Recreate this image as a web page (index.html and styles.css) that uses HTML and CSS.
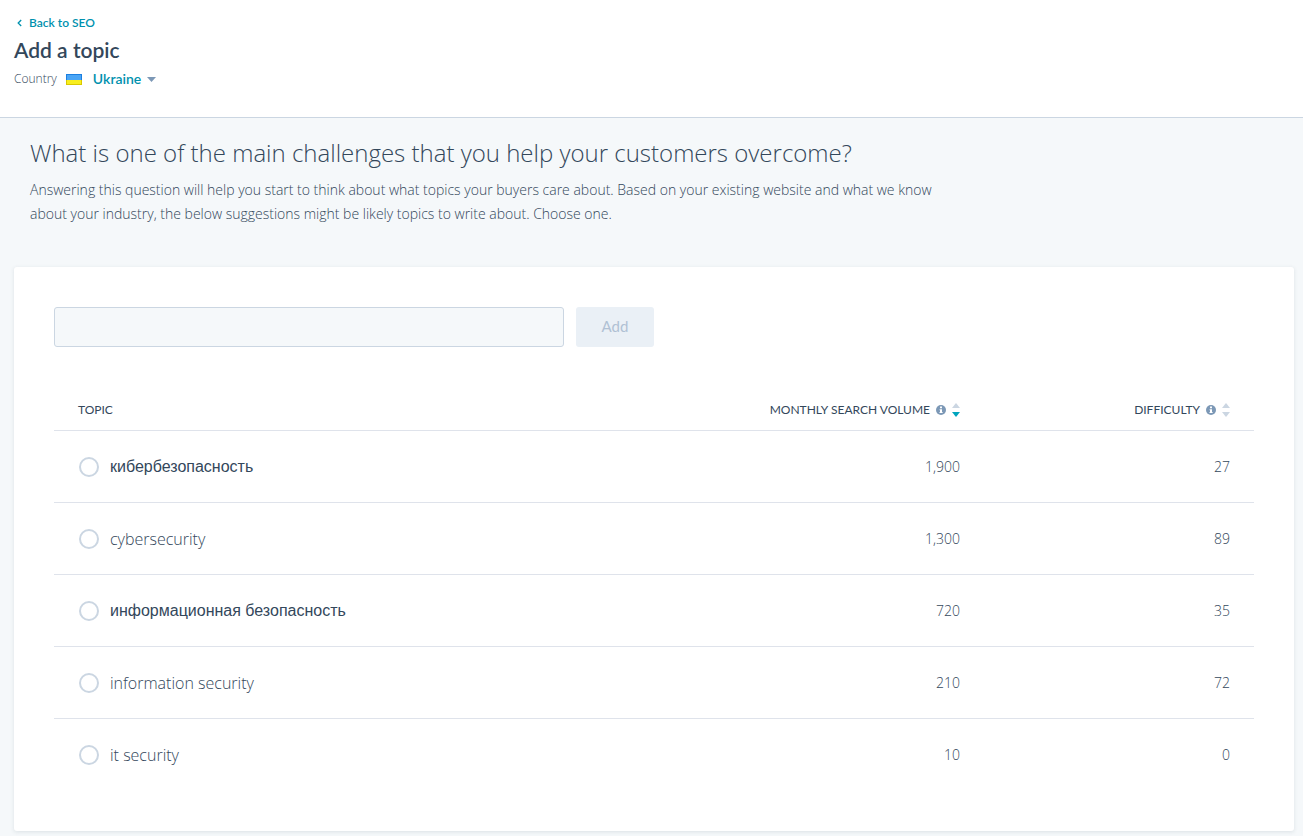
FILE: index.html
```html
<!DOCTYPE html>
<html lang="en">
<head>
<meta charset="utf-8">
<title>Add a topic</title>
<meta name="viewport" content="width=device-width, initial-scale=1">
<link rel="stylesheet" href="styles.css">
</head>
<body>
<svg class="sprite" aria-hidden="true">
  <symbol id="info" viewBox="0 0 10 10">
    <circle cx="5" cy="5" r="5" fill="#7c98b6"/>
    <path d="M4 1.6h2v1.6H4zM3.6 4.2H6v2.9h.6v1H3.500v-1H4V5.2h-.4z" fill="#fff"/>
  </symbol>
</svg>
<header class="page-header">
  <a class="back-link" href="#">
    <svg class="back-icon" viewBox="0 0 5 8" aria-hidden="true"><path d="M4.2 1 1.2 4l3 3" fill="none" stroke="currentColor" stroke-width="1.3"/></svg>
    Back to SEO
  </a>
  <h1 class="page-title">Add a topic</h1>
  <div class="country">
    <span class="country-label" id="country-label">Country</span>
    <svg class="flag" viewBox="0 0 16 11" aria-hidden="true">
      <rect width="16" height="6" fill="#1b7fe0"/>
      <rect x="1" y="1" width="14" height="5" fill="#4aa5f5"/>
      <rect y="6" width="16" height="5" fill="#d9c800"/>
      <rect x="1" y="6" width="14" height="4" fill="#f8ee1e"/>
    </svg>
    <button class="country-button" type="button" aria-describedby="country-label">Ukraine
      <svg class="caret" viewBox="0 0 9 5" aria-hidden="true"><path d="M0 0h9L4.500 5z" fill="#7c98b6"/></svg>
    </button>
  </div>
</header>
<main class="content">
  <section class="intro">
    <h2 class="intro-title">What is one of the main challenges that you help your customers overcome?</h2>
    <p class="intro-text">Answering this question will help you start to think about what topics your buyers care about. Based on your existing website and what we know about your industry, the below suggestions might be likely topics to write about. Choose one.</p>
  </section>
  <section class="card">
    <form class="add-form">
      <input class="topic-input" type="text" aria-label="Topic">
      <button class="add-button" type="button" disabled>Add</button>
    </form>
    <table class="topics">
      <thead>
        <tr>
          <th class="col-topic" scope="col">TOPIC</th>
          <th class="col-volume" scope="col"><button class="sort" type="button">MONTHLY SEARCH VOLUME
            <svg class="info" aria-hidden="true"><use href="#info"/></svg>
            <svg class="arrows" viewBox="0 0 8 14" aria-hidden="true"><path d="M0 5h8L4 0z" fill="#cbd6e2"/><path d="M0 9h8l-4 5z" fill="#00a4bd"/></svg></button></th>
          <th class="col-difficulty" scope="col"><button class="sort" type="button">DIFFICULTY
            <svg class="info" aria-hidden="true"><use href="#info"/></svg>
            <svg class="arrows" viewBox="0 0 8 14" aria-hidden="true"><path d="M0 5h8L4 0z" fill="#cbd6e2"/><path d="M0 9h8l-4 5z" fill="#cbd6e2"/></svg></button></th>
        </tr>
      </thead>
      <tbody>
        <tr><td><label class="choice cyrillic"><input class="radio" type="radio" name="topic">кибербезопасность</label></td><td class="number">1,900</td><td class="number">27</td></tr>
        <tr><td><label class="choice"><input class="radio" type="radio" name="topic">cybersecurity</label></td><td class="number">1,300</td><td class="number">89</td></tr>
        <tr><td><label class="choice cyrillic"><input class="radio" type="radio" name="topic">информационная безопасность</label></td><td class="number">720</td><td class="number">35</td></tr>
        <tr><td><label class="choice"><input class="radio" type="radio" name="topic">information security</label></td><td class="number">210</td><td class="number">72</td></tr>
        <tr><td><label class="choice"><input class="radio" type="radio" name="topic">it security</label></td><td class="number">10</td><td class="number">0</td></tr>
      </tbody>
    </table>
  </section>
</main>
</body>
</html>
```
FILE: styles.css
```css
*, *::before, *::after { box-sizing: border-box; }

body {
  margin: 0;
  background: #f5f8fa;
  color: #33475b;
  font-family: Lato, "Liberation Sans", sans-serif;
  font-size: 14px;
  font-variant-ligatures: none;
  line-height: 24px;
}

button { border: 0; padding: 0; background: none; color: inherit; font: inherit; }

.sprite { display: block; width: 0; height: 0; }

.page-header {
  padding: 13px 14px 26px;
  background: #fff;
  border-bottom: 1px solid #cbd6e2;
}

.back-link {
  display: flex;
  align-items: center;
  gap: 7px;
  padding-left: 3px;
  color: #0091ae;
  font-size: 12px;
  font-weight: 600;
  line-height: 19px;
  text-decoration: none;
}
.back-icon { width: 5px; height: 8px; }

.page-title {
  margin: 4px 0 3px;
  font-size: 21px;
  font-weight: 600;
  line-height: 28px;
}

.country { display: flex; align-items: center; }
.country-label { font-family: "Open Sans", sans-serif; font-size: 12px; font-weight: 350; }
.flag { width: 16px; height: 11px; margin: 0 11px 0 9px; }
.country-button {
  display: flex;
  align-items: center;
  gap: 6px;
  color: #0091ae;
  font-size: 14px;
  font-weight: 600;
}
.caret { width: 9px; height: 5px; }

.content { padding: 19px 9px 5px 14px; }

.intro { padding: 0 16px; font-family: "Open Sans", sans-serif; font-weight: 350; }
.intro-title {
  margin: 0 0 9px;
  font-size: 24px;
  font-weight: 350;
  line-height: 32px;
}
.intro-text { max-width: 928px; margin: 0 0 41px; }

.card {
  padding: 40px;
  background: #fff;
  border-radius: 3px;
  box-shadow: 0 1px 4px rgba(45, 62, 80, 0.12);
}

.add-form { display: flex; gap: 12px; }
.topic-input {
  width: 510px;
  min-width: 0;
  height: 40px;
  padding: 0 12px;
  border: 1px solid #cbd6e2;
  border-radius: 3px;
  background: #f5f8fa;
  color: inherit;
  font: inherit;
}
.add-button {
  width: 78px;
  padding-bottom: 2px;
  border-radius: 3px;
  background: #eaf0f6;
  color: #b0c1d4;
  font-size: 15px;
}

.topics { width: 100%; margin-top: 42px; border-collapse: separate; border-spacing: 0; table-layout: fixed; }
.topics th {
  height: 42px;
  padding: 0 24px;
  border-bottom: 1px solid #dfe3eb;
  font-size: 12px;
  font-weight: 400;
  text-align: left;
}
.topics td { height: 72px; padding: 0 24px; border-bottom: 1px solid #dfe3eb; }
.topics tbody tr:last-child td { border-bottom-color: transparent; }
.col-volume { width: 300px; }
.col-difficulty { width: 270px; }
.sort { display: flex; align-items: center; gap: 6px; margin-left: auto; white-space: nowrap; }
.info { width: 10px; height: 10px; }
.arrows { width: 8px; height: 14px; }

.choice {
  display: flex;
  align-items: center;
  gap: 11px;
  padding-left: 1px;
  font-family: "Open Sans", sans-serif;
  font-size: 16px;
  font-weight: 350;
}
.cyrillic { font-family: "Liberation Sans", Arial, sans-serif; font-weight: 400; }
.radio {
  appearance: none;
  flex: none;
  width: 20px;
  height: 20px;
  margin: 0;
  border: 2px solid #cbd6e2;
  border-radius: 50%;
  background: #fff;
}
.radio:checked { border: 6px solid #00a4bd; }
.topics .number {
  font-family: "Open Sans", sans-serif;
  font-weight: 350;
  text-align: right;
}
```
